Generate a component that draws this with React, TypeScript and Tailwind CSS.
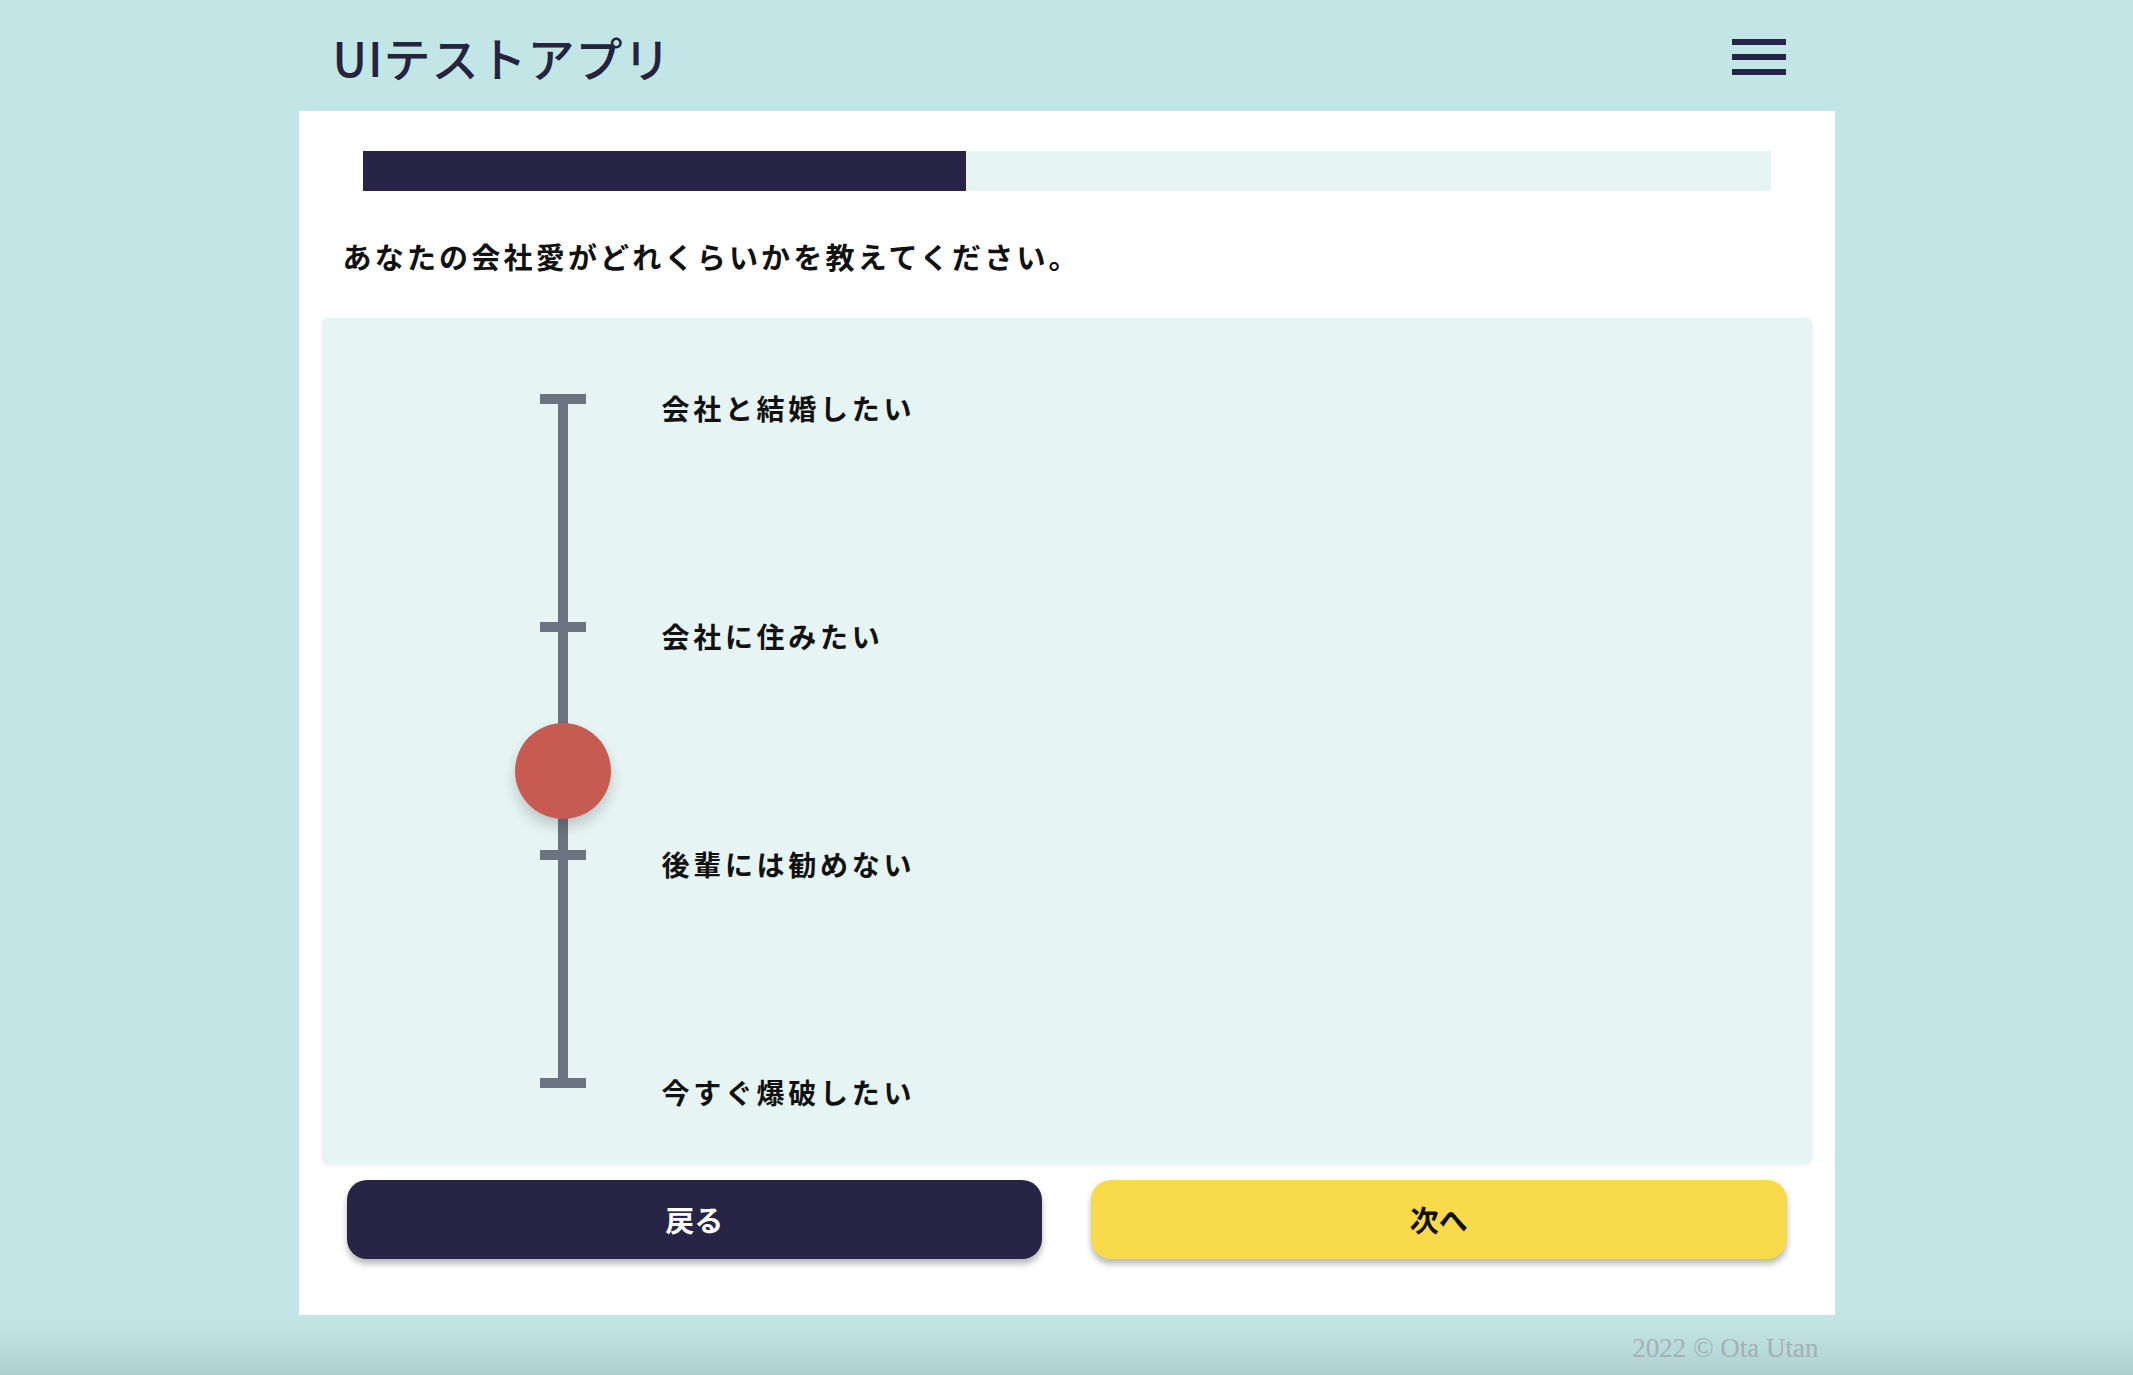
import { useState } from "react";

const labels = ["会社と結婚したい", "会社に住みたい", "後輩には勧めない", "今すぐ爆破したい"];

function Hamburger() {
  return (
    <button className="flex flex-col gap-[9px]">
      <span className="block w-[54px] h-[6px] bg-[#27244a]" />
      <span className="block w-[54px] h-[6px] bg-[#27244a]" />
      <span className="block w-[54px] h-[6px] bg-[#27244a]" />
    </button>
  );
}

function VerticalSlider({ knobTop }: { knobTop: number }) {
  return (
    <div className="flex pt-[76px] pl-[218px]">
      <div className="relative flex flex-col items-center w-[46px]">
        <span className="block w-[46px] h-[10px] bg-[#6b7480]" />
        <span className="block w-[10px] h-[218px] bg-[#6b7480]" />
        <span className="block w-[46px] h-[10px] bg-[#6b7480]" />
        <span className="block w-[10px] h-[218px] bg-[#6b7480]" />
        <span className="block w-[46px] h-[10px] bg-[#6b7480]" />
        <span className="block w-[10px] h-[218px] bg-[#6b7480]" />
        <span className="block w-[46px] h-[10px] bg-[#6b7480]" />
        <span
          className="absolute left-1/2 -translate-x-1/2 w-[96px] h-[96px] rounded-full bg-[#c85b51] shadow-[0_8px_14px_rgba(0,0,0,0.18)]"
          style={{ top: knobTop }}
        />
      </div>
      <div className="flex flex-col ml-[76px] -mt-[6px]">
        {labels.map((l, i) => (
          <div
            key={l}
            className={`${i < labels.length - 1 ? "h-[228px]" : ""} leading-[40px] text-[28px] tracking-[3.7px] font-bold text-[#111]`}
          >
            {l}
          </div>
        ))}
      </div>
    </div>
  );
}

export default function App() {
  const [progress] = useState(603);

  return (
    <div className="h-[1375px] overflow-hidden bg-[linear-gradient(to_bottom,#c2e6e5_96%,#aed1d1)] flex flex-col items-center font-['Noto_Sans_CJK_JP',sans-serif]">
      <header className="w-[1536px] h-[111px] flex items-center justify-between pl-[34px] pr-[49px] pt-[2px]">
        <h1 className="text-[47px] font-medium text-[#26233f] leading-none tracking-[1px]">UIテストアプリ</h1>
        <Hamburger />
      </header>

      <main className="w-[1536px] bg-white flex flex-col pt-[40px] pb-[56px]">
        <div className="mx-[64px] h-[40px] bg-[#e6f4f4] flex">
          <div className="h-full bg-[#272445]" style={{ width: progress }} />
        </div>

        <p className="mt-[45px] pl-[44px] text-[29px] leading-[40px] tracking-[3.2px] font-bold text-[#111]">
          あなたの会社愛がどれくらいかを教えてください。
        </p>

        <div className="mt-[42px] mx-[23px] h-[846px] bg-[#e6f4f4] rounded-md shadow-[0_1px_4px_rgba(0,0,0,0.08)]">
          <VerticalSlider knobTop={329} />
        </div>

        <div className="mt-[16px] px-[48px] flex gap-[49px]">
          <button className="flex-1 h-[79px] rounded-[20px] bg-[#272445] text-white text-[29px] font-bold shadow-[0_5px_6px_rgba(0,0,0,0.28)]">
            戻る
          </button>
          <button className="flex-1 h-[79px] rounded-[20px] bg-[#f8da4a] text-[#111] text-[29px] font-bold shadow-[0_5px_6px_rgba(0,0,0,0.28)]">
            次へ
          </button>
        </div>
      </main>

      <footer className="w-[1536px] flex justify-end pr-[16px] pt-[18px]">
        <span className="font-['Liberation_Serif',serif] text-[27px] leading-[30px] text-[#a7aeb6]">2022 © Ota Utan</span>
      </footer>
    </div>
  );
}
